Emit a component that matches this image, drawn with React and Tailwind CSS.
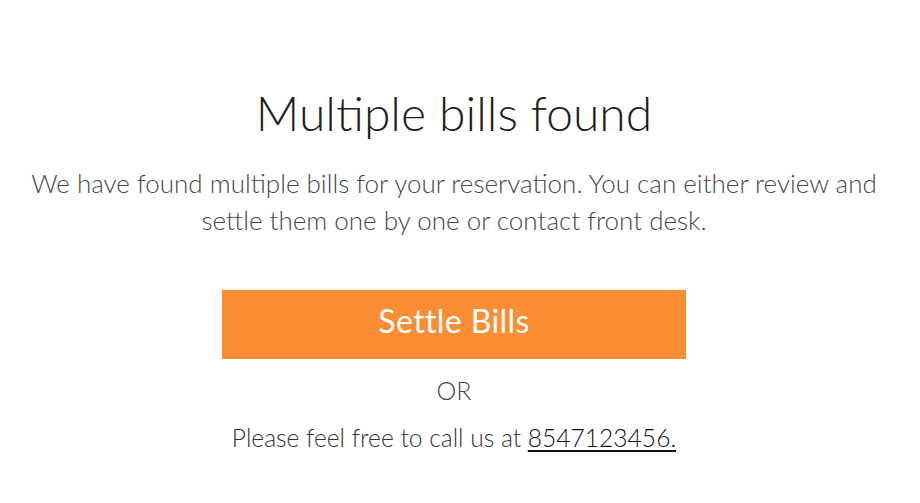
export default function App() {
  return (
    <div className="min-h-[503px] w-full bg-white font-['Lato',sans-serif]">
      <div className="w-[908px] flex flex-col items-center pt-[85px] text-center">
        <h1 className="text-[48px] leading-[56px] font-light text-[#1f1f1f]">Multiple bills found</h1>
        <p className="mt-[24px] w-[850px] text-[26px] leading-[37px] font-light text-[#474747]">
          We have found multiple bills for your reservation. You can either review and settle them one by one or contact front desk.
        </p>
        <button className="mt-[51px] w-[464px] h-[69px] pb-[8px] flex items-center justify-center bg-[#fb8e34] text-white text-[32px] tracking-[0.4px] font-normal">
          Settle Bills
        </button>
        <div className="mt-[16px] text-[25px] leading-[30px] font-light text-[#444]">OR</div>
        <div className="mt-[18px] text-[24.6px] leading-[30px] font-light text-[#333]">
          Please feel free to call us at <a className="underline underline-offset-[3px] text-[#111]" href="#">8547123456.</a>
        </div>
      </div>
    </div>
  );
}
